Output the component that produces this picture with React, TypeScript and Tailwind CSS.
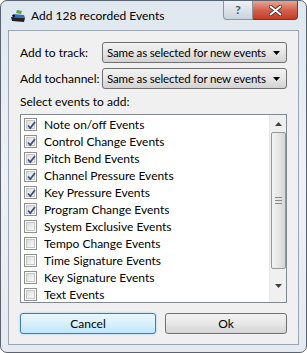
import React from 'react'

const font = { fontFamily: 'Lato, "Liberation Sans", sans-serif' }

const events: { label: string; checked: boolean }[] = [
  { label: 'Note on/off Events', checked: true },
  { label: 'Control Change Events', checked: true },
  { label: 'Pitch Bend Events', checked: true },
  { label: 'Channel Pressure Events', checked: true },
  { label: 'Key Pressure Events', checked: true },
  { label: 'Program Change Events', checked: true },
  { label: 'System Exclusive Events', checked: false },
  { label: 'Tempo Change Events', checked: false },
  { label: 'Time Signature Events', checked: false },
  { label: 'Key Signature Events', checked: false },
  { label: 'Text Events', checked: false },
]

function CheckBox({ checked }: { checked: boolean }) {
  return (
    <div className="w-[13px] h-[13px] border border-[#8e8f8f] bg-white p-[1px] shrink-0">
      <div className="w-full h-full border border-[#c6c6c6] bg-gradient-to-br from-[#dcdcdc] to-[#fbfbfb] relative">
        {checked && (
          <svg className="absolute -left-[1px] -top-[1px]" width="11" height="11" viewBox="0 0 11 11">
            <path d="M2 5.5 L4.3 8 L9 2" fill="none" stroke="#3b4f8a" strokeWidth="1.8" />
          </svg>
        )}
      </div>
    </div>
  )
}

function Combo() {
  return (
    <div className="flex-1 min-w-0 overflow-hidden h-[21px] rounded-[3px] border border-[#707070] bg-gradient-to-b from-[#f2f2f2] via-[#e6e6e6] to-[#d2d2d2] flex items-center pl-[4px] pr-[6px] text-[11.5px] tracking-[-0.15px] text-black whitespace-nowrap">
      <span className="flex-1 leading-none">Same as selected for new events</span>
      <svg className="shrink-0" width="7" height="4" viewBox="0 0 7 4">
        <path d="M0 0 H7 L3.5 4 Z" fill="#000" />
      </svg>
    </div>
  )
}

function WinButton({ label, focused }: { label: string; focused?: boolean }) {
  return (
    <div
      className={
        focused
          ? 'h-[21px] rounded-[3px] border border-[#3c7fb1] bg-gradient-to-b from-[#eaf6fd] via-[#d9f0fc] to-[#bee6fd] shadow-[0_0_2px_#7ec3ee] flex items-center justify-center text-[12px]'
          : 'h-[21px] rounded-[3px] border border-[#707070] bg-gradient-to-b from-[#f2f2f2] via-[#e8e8e8] to-[#d4d4d4] flex items-center justify-center text-[12px]'
      }
    >
      {label}
    </div>
  )
}

export default function App() {
  return (
    <div className="w-[307px] h-[353px] bg-white" style={font}>
      <div className="w-full h-full rounded-[7px] border border-[#5a6470] bg-gradient-to-b from-[#dfe7ef] via-[#eef2f6] to-[#e4eaf0] flex flex-col">
        {/* title bar */}
        <div className="h-[29px] flex items-start relative">
          <svg className="ml-[9px] mt-[8px]" width="16" height="14" viewBox="0 0 16 14">
            <path d="M7 1 L12 2 L11 5 L6 4 Z" fill="#55a84a" />
            <path d="M3 5 L14 6 L15 9 L2 8 Z" fill="#3d6bb4" />
            <path d="M1 8 L15 9 L14 13 L2 12 Z" fill="#222" />
            <path d="M2 6 L5 6 L4 9 Z" fill="#111" />
          </svg>
          <span className="ml-[5px] mt-[8px] text-[12px] leading-[14px] text-black whitespace-nowrap">Add 128 recorded Events</span>
          <div className="absolute right-[8px] top-0 flex">
            <div className="w-[30px] h-[19px] rounded-bl-[4px] border border-t-0 border-[#8b96a2] bg-gradient-to-b from-[#eef2f6] to-[#c9d3de] flex items-center justify-center text-[12px] text-[#4a5563] font-bold">
              ?
            </div>
            <div className="w-[45px] h-[19px] rounded-br-[4px] border border-t-0 border-l-0 border-[#6d3a34] bg-gradient-to-b from-[#e8a493] via-[#d2624e] to-[#c53a24] flex items-center justify-center">
              <svg width="13" height="11" viewBox="0 0 13 11">
                <path d="M1.5 1.5 L11.5 9.5 M11.5 1.5 L1.5 9.5" stroke="#5a2a22" strokeWidth="3.6" strokeLinecap="round" />
                <path d="M1.5 1.5 L11.5 9.5 M11.5 1.5 L1.5 9.5" stroke="#fff" strokeWidth="2" strokeLinecap="round" />
              </svg>
            </div>
          </div>
        </div>

        {/* client area */}
        <div className="mx-[7px] mb-[7px] flex-1 border border-[#9aa6b2] bg-[#f0f0f0] px-[11px] pt-[11px] flex flex-col text-[12px] text-black whitespace-nowrap">
          <div className="flex items-center">
            <span className="w-[82px] shrink-0">Add to track:</span>
            <Combo />
          </div>
          <div className="flex items-center mt-[5px]">
            <span className="w-[82px] shrink-0">Add tochannel:</span>
            <Combo />
          </div>
          <div className="mt-[5px] h-[16px] leading-[16px]">Select events to add:</div>

          <div className="mt-[4px] h-[189px] border border-[#828790] bg-white flex">
            <div className="flex-1 pl-[3px] pt-[1px]">
              {events.map((e) => (
                <div key={e.label} className="h-[17px] flex items-center gap-[7px]">
                  <CheckBox checked={e.checked} />
                  <span className="leading-none">{e.label}</span>
                </div>
              ))}
            </div>
            <div className="w-[17px] bg-[#f0f0f0] border-l border-[#e6e6e6] flex flex-col items-center">
              <div className="h-[17px] flex items-center justify-center">
                <svg width="7" height="4" viewBox="0 0 7 4">
                  <path d="M0 4 H7 L3.5 0 Z" fill="#404040" />
                </svg>
              </div>
              <div className="w-[15px] h-[137px] rounded-[2px] border border-[#979797] bg-gradient-to-r from-[#f3f3f3] via-[#e6e6e6] to-[#d6d6d6] flex items-center justify-center">
                <div className="flex flex-col gap-[2px]">
                  <div className="w-[7px] h-[1px] bg-[#8a8a8a]" />
                  <div className="w-[7px] h-[1px] bg-[#8a8a8a]" />
                  <div className="w-[7px] h-[1px] bg-[#8a8a8a]" />
                </div>
              </div>
              <div className="flex-1 flex items-center justify-center">
                <svg width="7" height="4" viewBox="0 0 7 4">
                  <path d="M0 0 H7 L3.5 4 Z" fill="#404040" />
                </svg>
              </div>
            </div>
          </div>

          <div className="mt-[10px] flex gap-[9px]">
            <div className="w-[136px]">
              <WinButton label="Cancel" focused />
            </div>
            <div className="flex-1">
              <WinButton label="Ok" />
            </div>
          </div>
        </div>
      </div>
    </div>
  )
}
